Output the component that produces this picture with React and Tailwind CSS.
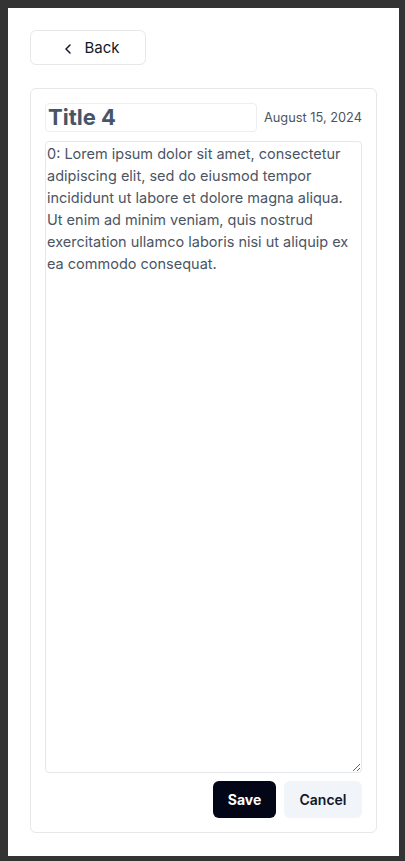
import React, { useState } from 'react'
import { ChevronLeft } from 'lucide-react'

const BODY =
  '0: Lorem ipsum dolor sit amet, consectetur adipiscing elit, sed do eiusmod tempor incididunt ut labore et dolore magna aliqua. Ut enim ad minim veniam, quis nostrud exercitation ullamco laboris nisi ut aliquip ex ea commodo consequat.'

export default function App() {
  const [title, setTitle] = useState('Title 4')
  const [body, setBody] = useState(BODY)

  return (
    <div
      className="w-[405px] h-[861px] bg-[#333333] pt-2 pl-2 pr-[6px] pb-[5px]"
      style={{ fontFamily: 'Inter, "Noto Sans", sans-serif' }}
    >
      <div className="w-[391px] h-[848px] bg-white p-[22px] flex flex-col">
        <button className="w-[116px] h-[35px] pt-[2px] border border-[#e5e7eb] rounded-md flex items-center justify-center gap-[8px] text-[15px] text-[#111827]">
          <ChevronLeft className="w-4 h-4 ml-[4px]" strokeWidth={2.25} />
          Back
        </button>

        <div className="mt-[23px] h-[745px] border border-[#e5e7eb] rounded-md p-[14px] flex flex-col">
          <div className="flex items-center justify-between">
            <input
              value={title}
              onChange={e => setTitle(e.target.value)}
              className="w-[212px] h-[29px] border border-[#eceef1] rounded-sm px-[2px] text-[22px] font-bold text-[#475569] outline-none"
            />
            <span className="text-[12.8px] text-[#4b5563]">August 15, 2024</span>
          </div>

          <textarea
            value={body}
            onChange={e => setBody(e.target.value)}
            className="mt-[9px] h-[633px] border border-[#e5e7eb] rounded px-[1px] py-[1px] text-[14.5px] leading-[22px] text-[#4b5563] outline-none"
          />

          <div className="mt-2 flex justify-end gap-2">
            <button className="w-[63px] h-[37px] rounded-md bg-[#020617] text-white text-[14px] font-bold">
              Save
            </button>
            <button className="w-[78px] h-[37px] rounded-md bg-[#f1f5f9] text-[#0f172a] text-[14px] font-semibold">
              Cancel
            </button>
          </div>
        </div>
      </div>
    </div>
  )
}
